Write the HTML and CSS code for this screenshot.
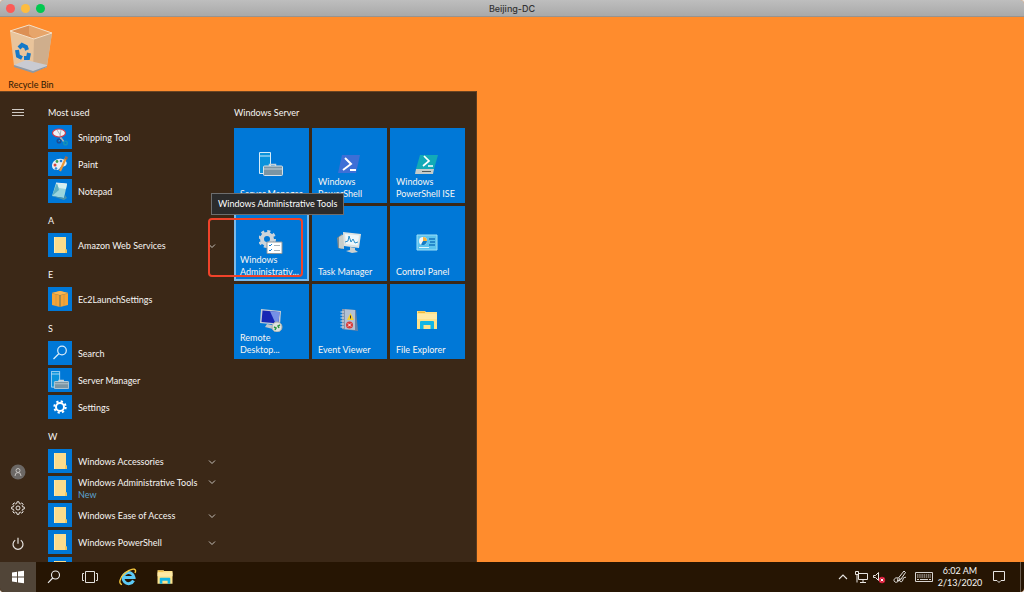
FILE: index.html
```html
<!DOCTYPE html>
<html lang="en">
<head>
    <meta charset="UTF-8">
    <meta name="viewport" content="width=device-width, initial-scale=1.0">
    <title>Beijing-DC</title>
    <link rel="stylesheet" href="styles.css">
</head>
<body>

    <!-- Icons that are used more than once -->
    <svg class="defs" aria-hidden="true">
        <symbol id="folder" viewBox="0 0 24 24">
            <path d="M6 4h12v12l1 1v3H6z" fill="#fbdc8c"/>
            <path d="M6 4h1v16H6z" fill="#ffeab0"/>
            <path d="M17 16l2 1v3h-2z" fill="#f3c65f"/>
        </symbol>
        <symbol id="chevron" viewBox="0 0 8 8">
            <path d="M1 2.5l3 3 3-3" fill="none" stroke="#c4bfb9" stroke-width="1"/>
        </symbol>
        <symbol id="server" viewBox="0 0 24 24">
            <path d="M.5 .5h11v21H.5z" fill="#0a93dc" stroke="#d5ecf9"/>
            <path d="M.5 4h11" stroke="#d5ecf9"/>
            <path d="M10.5 14v-1.5h6V14" fill="none" stroke="#c6d2d9" stroke-width="1.5"/>
            <rect x="4.5" y="14" width="19" height="9.5" rx="1" fill="#7c95a3" stroke="#d6e0e6"/>
            <path d="M5 17h18" stroke="#c3d0d8"/>
        </symbol>
        <symbol id="explorer" viewBox="0 0 24 24">
            <path d="M2 3h8l1 1h11v17H2z" fill="#fde28c"/>
            <path d="M3 3.5h7V5H3z" fill="#f0b93a"/>
            <path d="M2 6h20v5H2z" fill="#ffeaa6"/>
            <path d="M5 21v-7q0-1 1-1h12q1 0 1 1v7h-3.500v-4h-7v4z" fill="#12b5e5"/>
        </symbol>
    </svg>

    <header class="titlebar">
        <div class="lights">
            <button class="light red" aria-label="Close"></button>
            <button class="light yellow" aria-label="Minimize"></button>
            <button class="light green" aria-label="Zoom"></button>
        </div>
        <h1>Beijing-DC</h1>
    </header>

    <main class="desktop">
        <a class="shortcut" href="#">
            <svg width="44" height="50" viewBox="0 0 44 50">
                <path d="M1 7L20 1l23 8-5 33-14 6L5 42z" fill="#e9c49b"/>
                <path d="M1 7L20 1l23 8-18 6z" fill="#dc9055"/>
                <path d="M20 1v9l5 5L43 9z" fill="#e7a56a"/>
                <path d="M25 15L43 9l-5 33-14 6z" fill="#cfae8c"/>
                <path d="M5 41l12-5 21 5v2l-14 5z" fill="#c9cbd2"/>
                <path d="M5 41l19 6 14-5v1l-14 6-19-6z" fill="#8f99a4"/>
                <path d="M1 7l24 8L43 9 20 1z" fill="none" stroke="#f5dfc6"/>
                <g fill="none" stroke="#1479c9" stroke-width="4">
                    <path d="M10 24l3-3 4 2 1 3"/>
                    <path d="M8 26l1 6 4 2"/>
                    <path d="M15 34h4l1-5"/>
                </g>
            </svg>
            <span>Recycle Bin</span>
        </a>

        <section class="start-menu">
            <nav class="rail">
                <button aria-label="Expand">
                    <svg width="14" height="14" viewBox="0 0 14 14"><path d="M1 3.5h12M1 6.500h12M1 9.500h12" stroke="#cfcac4"/></svg>
                </button>
                <div class="rail-bottom">
                    <button aria-label="Account">
                        <svg width="16" height="16" viewBox="0 0 16 16"><circle cx="8" cy="8" r="7.500" fill="#6c6865"/><circle cx="8" cy="6.500" r="2" fill="none" stroke="#c5c2bf"/><path d="M5 12q0-3.500 3-3.500t3 3.500" fill="none" stroke="#c5c2bf"/></svg>
                    </button>
                    <button aria-label="Settings">
                        <svg width="14" height="14" viewBox="0 0 14 14" fill="none" stroke="#e6e2de"><path d="M5.700 2.600L6 .8h2l.3 1.800 1 .4 1.500-1.100 1.400 1.400-1.100 1.500.4 1 1.800.2v2l-1.800.3-.4 1 1.100 1.500-1.400 1.400-1.500-1.100-1 .4-.3 1.800H6l-.3-1.800-1-.4-1.500 1.100-1.400-1.400 1.100-1.500-.4-1L.7 8V6l1.800-.3.4-1-1.100-1.500 1.400-1.400L4.700 3z"/><circle cx="7" cy="7" r="2"/></svg>
                    </button>
                    <button aria-label="Power">
                        <svg width="14" height="14" viewBox="0 0 14 14" fill="none" stroke="#e6e2de" stroke-width="1.200"><path d="M4.200 3.200a5 5 0 1 0 5.600 0M7 .8v6"/></svg>
                    </button>
                </div>
            </nav>

            <div class="apps">
                <h2>Most used</h2>
                <a class="app" href="#">
                    <svg class="app-icon" viewBox="0 0 24 24"><path d="M11 10l5 7M14 9l-2 7" stroke="#aab4be" stroke-width="1.500"/><ellipse cx="11" cy="8" rx="6.500" ry="4" fill="#f1f2f6" stroke="#cf3a4c" stroke-width="1.200"/><path d="M9 5l4 6M13 5l-1 6" stroke="#aab4be"/><circle cx="11" cy="16" r="1.800" fill="none" stroke="#1c4d94" stroke-width="1.500"/><circle cx="17.500" cy="18" r="1.800" fill="none" stroke="#1592b6" stroke-width="1.500"/></svg>
                    <span>Snipping Tool</span>
                </a>
                <a class="app" href="#">
                    <svg class="app-icon" viewBox="0 0 24 24"><path d="M4 14c0-5 5-8 10-7 5 1 6 5 3 7-2 1-4 0-5 2-1 3-8 3-8-2z" fill="#e8eef3"/><circle cx="7" cy="13" r="1.500" fill="#d9463c"/><circle cx="9" cy="9.500" r="1.400" fill="#3fa34d"/><circle cx="13" cy="9" r="1.300" fill="#2b7bd0"/><circle cx="8" cy="16.500" r="1.300" fill="#2f8ddb"/><path d="M18 6l-6 13" stroke="#e8973a" stroke-width="2.200"/><path d="M17 4l3 1-1 3-2-1z" fill="#9b6a4b"/></svg>
                    <span>Paint</span>
                </a>
                <a class="app" href="#">
                    <svg class="app-icon" viewBox="0 0 24 24"><path d="M8 4l11 1-3 14-12-2z" fill="#9bd5dd"/><path d="M8 4l11 1-1 5-7-1z" fill="#d4f0f1"/><path d="M4 17l12 2 1-3 2 3-3 2z" fill="#4a91aa"/><path d="M9 4l-5 13 7-6z" fill="#5cafc2"/><path d="M8 4l11 1" stroke="#e7edf0"/></svg>
                    <span>Notepad</span>
                </a>

                <h2>A</h2>
                <a class="app" href="#">
                    <svg class="app-icon"><use href="#folder"/></svg>
                    <span>Amazon Web Services</span>
                    <svg class="chevron"><use href="#chevron"/></svg>
                </a>

                <h2>E</h2>
                <a class="app" href="#">
                    <svg class="app-icon" viewBox="0 0 24 24"><path d="M4 6l8-2 8 2v12l-8 2-8-2z" fill="#f3a436"/><path d="M4 6l8 2 8-2" fill="none" stroke="#8a8257" stroke-width=".8"/><path d="M12 8v12" stroke="#8a8257" stroke-width="1.500"/><path d="M8 7v12M16 7v12" stroke="#c0934a" stroke-width=".6"/><path d="M4 6l8-2 8 2-8 2z" fill="#f8b650"/></svg>
                    <span>Ec2LaunchSettings</span>
                </a>

                <h2>S</h2>
                <a class="app" href="#">
                    <svg class="app-icon" viewBox="0 0 24 24" fill="none" stroke="#d9ecfa" stroke-width="1.200"><circle cx="14" cy="9.500" r="4.300"/><path d="M11 12.500L5.500 18"/></svg>
                    <span>Search</span>
                </a>
                <a class="app" href="#">
                    <svg class="app-icon" viewBox="0 0 24 24"><use href="#server" x="3" y="3" width="18" height="18"/></svg>
                    <span>Server Manager</span>
                </a>
                <a class="app" href="#">
                    <svg class="app-icon" viewBox="0 0 24 24" fill="none" stroke="#fff"><circle cx="12" cy="12" r="4" stroke-width="2"/><circle cx="12" cy="12" r="5.700" stroke-width="2" stroke-dasharray="2.200 2.277"/></svg>
                    <span>Settings</span>
                </a>

                <h2>W</h2>
                <a class="app" href="#">
                    <svg class="app-icon"><use href="#folder"/></svg>
                    <span>Windows Accessories</span>
                    <svg class="chevron"><use href="#chevron"/></svg>
                </a>
                <a class="app two-line" href="#">
                    <svg class="app-icon"><use href="#folder"/></svg>
                    <span>Windows Administrative Tools<small>New</small></span>
                    <svg class="chevron"><use href="#chevron"/></svg>
                </a>
                <a class="app" href="#">
                    <svg class="app-icon"><use href="#folder"/></svg>
                    <span>Windows Ease of Access</span>
                    <svg class="chevron"><use href="#chevron"/></svg>
                </a>
                <a class="app" href="#">
                    <svg class="app-icon"><use href="#folder"/></svg>
                    <span>Windows PowerShell</span>
                    <svg class="chevron"><use href="#chevron"/></svg>
                </a>
                <a class="app" href="#" aria-label="More apps">
                    <svg class="app-icon"><use href="#folder"/></svg>
                </a>
            </div>

            <div class="tiles">
                <h2>Windows Server</h2>
                <div class="tile-grid">
                    <a class="tile one-line" href="#">
                        <svg class="tile-icon"><use href="#server"/></svg>
                        <span>Server Manager</span>
                    </a>
                    <a class="tile" href="#">
                        <svg class="tile-icon" viewBox="0 0 24 24"><path d="M5 3h18l-4 18H1z" fill="#3d6fd6"/><path d="M8 6l6 6-8 6M13 18h6" fill="none" stroke="#fff" stroke-width="2"/></svg>
                        <span>Windows PowerShell</span>
                    </a>
                    <a class="tile" href="#">
                        <svg class="tile-icon" viewBox="0 0 24 24"><path d="M5 3h18l-4 14H1z" fill="#12aab8"/><path d="M9 4l5 5-6 5M13 14h5" fill="none" stroke="#fff" stroke-width="1.700"/><path d="M1 17h18l-1 5H0z" fill="#c4cbc9"/><path d="M7 19.500h9" stroke="#4d5a5c"/></svg>
                        <span>Windows PowerShell ISE</span>
                    </a>
                    <a class="tile selected" href="#">
                        <svg class="tile-icon" viewBox="0 0 24 24"><circle cx="8" cy="9" r="5" fill="none" stroke="#ccd4da" stroke-width="4"/><circle cx="8" cy="9" r="7.500" fill="none" stroke="#ccd4da" stroke-width="3" stroke-dasharray="3 2.890"/><path d="M8 12h15v11.500H8z" fill="#fff" stroke="#8d979e"/><path d="M10 15l1 1 2-2M10 20l1 1 2-2" fill="none" stroke="#1683d8"/><path d="M15 15.500h6M15 20.500h6" stroke="#a9b3ba"/></svg>
                        <span>Windows Administrativ...</span>
                    </a>
                    <a class="tile" href="#">
                        <svg class="tile-icon" viewBox="0 0 24 24"><path d="M0 8l5-4v15l-4-1z" fill="#858b8a"/><path d="M2 7l5-3v15l-5-1z" fill="#c8cfcc"/><path d="M6 2l18 2-2 14L7 16z" fill="#dfe3e1"/><path d="M8 4l14 1.500-1.500 10L9 14z" fill="#eef7fb"/><path d="M8 12l3-1 1-5 2 6 2-3 2 4 3-1" fill="none" stroke="#2b8fca"/><path d="M13 17l5 1v2l3 2-6 1-6-2 4-1z" fill="#cdd1cf"/></svg>
                        <span>Task Manager</span>
                    </a>
                    <a class="tile" href="#">
                        <svg class="tile-icon" viewBox="0 0 24 24"><path d="M2 5h20v15H2z" fill="#5cc3ee" stroke="#9be0f7"/><circle cx="8" cy="11" r="4" fill="#f4f8fa"/><path d="M8 11V7a4 4 0 0 1 4 4z" fill="#f6b23c"/><path d="M8 11h4a4 4 0 0 1-6 3.500z" fill="#137cc4"/><path d="M14 9h6M15 12h5M14 15h6" stroke="#1577c0" stroke-width="1.500"/><path d="M4 17.500h10" stroke="#dff5fd"/></svg>
                        <span>Control Panel</span>
                    </a>
                    <a class="tile" href="#">
                        <svg class="tile-icon" viewBox="0 0 24 24"><path d="M2 1l20 2-1 14L1 15z" fill="#c6cdd6"/><path d="M3.500 2.500L20.500 4l-1 11.500L2.500 14z" fill="#1727b4"/><path d="M11 3.200l9.500.8-1 11.500-3-.3z" fill="#7590e6"/><path d="M8 16l5 1 1 4-8-2z" fill="#bfc4ca"/><circle cx="18" cy="19" r="5" fill="#dfe2df" stroke="#aab0ac"/><path d="M15 19l2 1-1 2M21 17l-2 1 1 2" fill="none" stroke="#289440" stroke-width="1.500"/></svg>
                        <span>Remote Desktop...</span>
                    </a>
                    <a class="tile" href="#">
                        <svg class="tile-icon" viewBox="0 0 24 24"><path d="M5 1l14 1 2 21-16-2z" fill="#6c83a3"/><path d="M5 1l13 1v20L5 21z" fill="#b3c1d3"/><path d="M5 1l3 .2V21l-3-.3z" fill="#8596ad"/><path d="M3.500 4H7M3.500 7H7M3.500 10H7M3.500 13H7M3.500 16H7M3.500 19H7" stroke="#e0e5ec"/><path d="M13.500 5l3.500 7h-7z" fill="#f8cf2b"/><path d="M13.500 7.500v3" stroke="#333"/><circle cx="12.500" cy="17" r="3.500" fill="#d83a3a"/><path d="M11 15.500l3 3M14 15.500l-3 3" stroke="#fff"/></svg>
                        <span>Event Viewer</span>
                    </a>
                    <a class="tile" href="#">
                        <svg class="tile-icon"><use href="#explorer"/></svg>
                        <span>File Explorer</span>
                    </a>
                </div>
            </div>

            <div class="highlight"></div>
            <div class="tooltip" role="tooltip">Windows Administrative Tools</div>
        </section>
    </main>

    <footer class="taskbar">
        <button class="task start" aria-label="Start">
            <svg width="14" height="14" viewBox="0 0 14 14" fill="#fff"><path d="M1 2.600l5-.8v4.700H1zM7 1.600l6-.9v5.800H7zM1 7.500h5v4.700l-5-.8zM7 7.500h6v5.800l-6-.9z"/></svg>
        </button>
        <button class="task" aria-label="Search">
            <svg width="14" height="14" viewBox="0 0 14 14" fill="none" stroke="#eee" stroke-width="1.100"><circle cx="8.500" cy="5" r="4"/><path d="M5.700 8L1 12.800"/></svg>
        </button>
        <button class="task" aria-label="Task View">
            <svg width="16" height="12" viewBox="0 0 16 12" fill="none" stroke="#e3e0dd"><path d="M3.500 .5h9v11h-9zM2 2.500H.5v7H2M14 2.500h1.500v7H14"/></svg>
        </button>
        <button class="task wide" aria-label="Internet Explorer">
            <svg width="18" height="18" viewBox="0 0 18 18" fill="none"><path d="M14.500 12.500A5.500 5.500 0 1 1 15 9.500H4.500" stroke="#5ccaf6" stroke-width="3"/><path d="M3 16.500C-1 16 1 9 6 5s10-5 10.500-2.500q.2 1-.5 2.500" stroke="#f6c73c" stroke-width="1.400"/></svg>
        </button>
        <button class="task narrow" aria-label="File Explorer">
            <svg width="18" height="18"><use href="#explorer"/></svg>
        </button>

        <div class="tray">
            <button aria-label="Show hidden icons">
                <svg width="10" height="10" viewBox="0 0 10 10" fill="none" stroke="#e8e5e2" stroke-width="1.100"><path d="M1 7l4-4 4 4"/></svg>
            </button>
            <button aria-label="Network">
                <svg width="14" height="14" viewBox="0 0 14 14" fill="none" stroke="#e8e5e2"><path d="M4.500 3.500h9v6h-9zM9 9.500v2.500M6 12.500h6M1.500 1.500h3v3h-3zM3 4.500v8"/></svg>
            </button>
            <button aria-label="Volume">
                <svg width="14" height="14" viewBox="0 0 14 14"><path d="M1.500 5.500h2l3-3v8l-3-3h-2z" fill="none" stroke="#e8e5e2"/><circle cx="10" cy="10" r="3.200" fill="#d9203c"/><path d="M8.700 8.700l2.600 2.600M11.300 8.700l-2.600 2.600" stroke="#fff"/></svg>
            </button>
            <button class="pen" aria-label="Windows Ink">
                <svg width="14" height="14" viewBox="0 0 14 14" fill="none" stroke="#e8e5e2"><path d="M11 1l1.500 1.500-5.500 8-2.500.5.500-2.500zM5 8C1 7 0 11 2 12s4-1 5-4M7 11c1 2 3 0 3-2s2-1 3-2"/></svg>
            </button>
            <button class="keyboard" aria-label="Touch keyboard">
                <svg width="18" height="12" viewBox="0 0 18 12" fill="none" stroke="#d7d3cf"><path d="M.5 1.500h17v9H.5z"/><path d="M2 4h14M2 6h14" stroke-dasharray="1.500 .7"/><path d="M2 8.500h2M5 8.500h8M14 8.500h2"/></svg>
            </button>
            <button class="clock"><time>6:02 AM</time><time>2/13/2020</time></button>
            <button class="notify" aria-label="Notifications">
                <svg width="14" height="14" viewBox="0 0 14 14" fill="none" stroke="#e8e5e2"><path d="M1.500 1.500h11v9H9l-2 2-2-2H1.500z"/></svg>
            </button>
            <button class="show-desktop" aria-label="Show desktop"></button>
        </div>
    </footer>

</body>
</html>
```
FILE: styles.css
```css
* {
    box-sizing: border-box;
}

html {
    background-color: #e4e4e4;
}

body {
    display: flex;
    flex-direction: column;
    height: 100vh;
    margin: 0;
    overflow: hidden;
    border-radius: 4px;
    background-color: #ff8c2d;
    font-family: Lato, "Open Sans", sans-serif;
    font-size: 9px;
    line-height: 12px;
    color: #f7f5f3;
}

h1,
h2 {
    margin: 0;
    font-size: 9px;
    font-weight: normal;
}

a {
    color: inherit;
    text-decoration: none;
}

button {
    display: flex;
    align-items: center;
    justify-content: center;
    padding: 0;
    border: none;
    background: none;
    color: inherit;
    font: inherit;
}

.defs {
    position: absolute;
    width: 0;
    height: 0;
}

/* Window title bar */
.titlebar {
    display: grid;
    grid-template-columns: 1fr auto 1fr;
    align-items: center;
    height: 17px;
    flex-shrink: 0;
    padding: 1px 6px 0;
    border-bottom: 1px solid #98938f;
    background: linear-gradient(#bebebe, #a9a9a9);
    color: #333;
}

.titlebar h1 {
    font-family: Inter, sans-serif;
    font-weight: 500;
}

.lights {
    display: flex;
    gap: 6px;
}

.light {
    width: 9px;
    height: 9px;
    border-radius: 50%;
}

.red { background-color: #fc5b57; }
.yellow { background-color: #fdbc40; }
.green { background-color: #00c94f; }

/* Desktop */
.desktop {
    position: relative;
    flex: 1;
    min-height: 0;
}

.shortcut {
    display: flex;
    flex-direction: column;
    align-items: center;
    gap: 5px;
    width: 62px;
    padding-top: 7px;
    color: #2b1804;
}

/* Start menu */
.start-menu {
    position: absolute;
    left: 0;
    bottom: 0;
    display: grid;
    grid-template-columns: 36px 198px 1fr;
    width: 477px;
    height: 471px;
    border-top: 1px solid #6b4422;
    border-right: 1px solid #5a3c20;
    background-color: #3b2817;
}

.rail {
    display: flex;
    flex-direction: column;
    justify-content: space-between;
    padding-top: 3px;
}

.rail button {
    width: 36px;
    height: 36px;
}

.apps {
    height: 470px;
    overflow: hidden;
    padding: 5px 18px 0 12px;
}

.apps h2 {
    height: 27px;
    padding-top: 10px;
}

.app {
    display: flex;
    align-items: center;
    gap: 6px;
    height: 27px;
}

.app-icon {
    align-self: flex-start;
    width: 24px;
    height: 24px;
    flex-shrink: 0;
    margin-top: 1px;
    background-color: #0078d7;
}

.app span {
    flex: 1;
    white-space: nowrap;
}

.app small {
    display: block;
    font-size: 9px;
    color: #5ba3d0;
}

.chevron {
    width: 8px;
    height: 8px;
    flex-shrink: 0;
}

.two-line .chevron {
    align-self: flex-start;
    margin-top: 3px;
}

.tiles h2 {
    height: 36px;
    padding-top: 15px;
}

.tile-grid {
    display: grid;
    grid-template-columns: repeat(3, 75px);
    grid-auto-rows: 75px;
    gap: 3px;
}

.tile {
    display: flex;
    flex-direction: column;
    justify-content: space-between;
    padding: 24px 7px 3px 6px;
    background-color: #0078d7;
}

.tile-icon {
    width: 24px;
    height: 24px;
    align-self: center;
}

.one-line {
    white-space: nowrap;
}

.selected {
    box-shadow: inset 0 0 0 2px #79b9ea;
}

/* Overlays on the start menu */
.tooltip {
    position: absolute;
    left: 211px;
    top: 101px;
    padding: 4px 6px;
    border: 1px solid #6e6e6e;
    background-color: #2b2b2b;
    white-space: nowrap;
    color: #fff;
}

.highlight {
    position: absolute;
    left: 208px;
    top: 126px;
    width: 95px;
    height: 59px;
    border: 2px solid #f0432a;
    border-radius: 4px;
}

/* Taskbar */
.taskbar {
    display: flex;
    height: 30px;
    flex-shrink: 0;
    background-color: #261503;
}

.task {
    width: 36px;
}

.wide {
    width: 40px;
}

.narrow {
    width: 34px;
}

.start {
    background-color: #514538;
}

.tray {
    display: flex;
    margin-left: auto;
}

.tray button {
    width: 18px;
}

.tray .pen {
    width: 24px;
}

.tray .keyboard {
    width: 24px;
}

.tray .clock {
    flex-direction: column;
    width: 48px;
}

.tray .notify {
    width: 36px;
    padding-right: 6px;
}

.tray .show-desktop {
    width: 4px;
    border-left: 1px solid #6a5d4f;
}
```
